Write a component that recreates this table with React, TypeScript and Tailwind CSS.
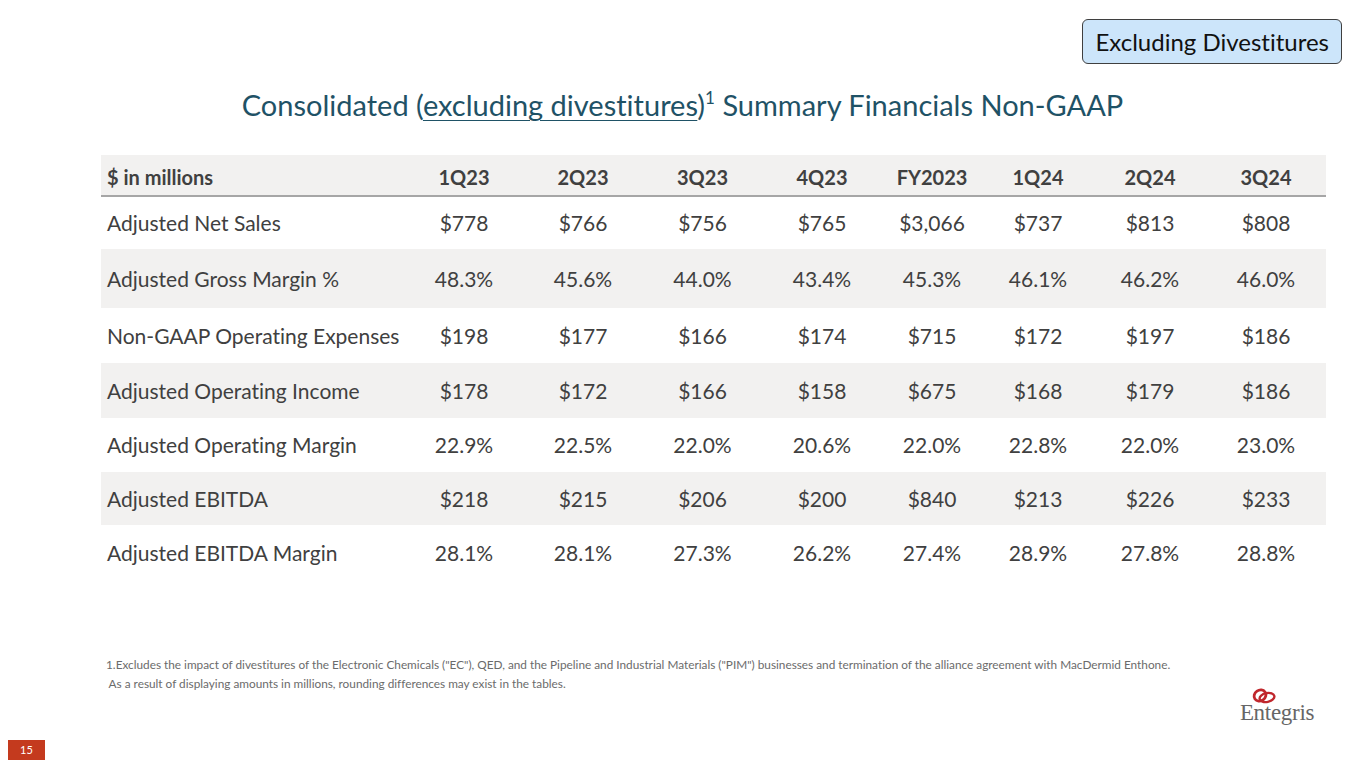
import React from "react";

const cols = ["1Q23", "2Q23", "3Q23", "4Q23", "FY2023", "1Q24", "2Q24", "3Q24"];

const rows = [
  { label: "Adjusted Net Sales", h: "h-[52px]", shade: false, values: ["$778", "$766", "$756", "$765", "$3,066", "$737", "$813", "$808"] },
  { label: "Adjusted Gross Margin %", h: "h-[59px]", shade: true, values: ["48.3%", "45.6%", "44.0%", "43.4%", "45.3%", "46.1%", "46.2%", "46.0%"] },
  { label: "Non-GAAP Operating Expenses", h: "h-[55px]", shade: false, values: ["$198", "$177", "$166", "$174", "$715", "$172", "$197", "$186"] },
  { label: "Adjusted Operating Income", h: "h-[55px]", shade: true, values: ["$178", "$172", "$166", "$158", "$675", "$168", "$179", "$186"] },
  { label: "Adjusted Operating Margin", h: "h-[54px]", shade: false, values: ["22.9%", "22.5%", "22.0%", "20.6%", "22.0%", "22.8%", "22.0%", "23.0%"] },
  { label: "Adjusted EBITDA", h: "h-[53px]", shade: true, values: ["$218", "$215", "$206", "$200", "$840", "$213", "$226", "$233"] },
  { label: "Adjusted EBITDA Margin", h: "h-[55px]", shade: false, values: ["28.1%", "28.1%", "27.3%", "26.2%", "27.4%", "28.9%", "27.8%", "28.8%"] },
];

const grid = "grid grid-cols-[304px_118px_120px_119px_120px_100px_112px_112px_120px]";

function EntegrisLogo() {
  return (
    <div className="flex flex-col w-[78px]">
      <svg width="25" height="16" viewBox="0 0 25 16" className="ml-[14px] -mb-[3px]">
        <ellipse cx="8" cy="7.5" rx="6.2" ry="5.3" fill="none" stroke="#c0272d" strokeWidth="2.8" transform="rotate(-35 8 7.5)" />
        <ellipse cx="15" cy="9.5" rx="7.5" ry="4.4" fill="none" stroke="#c0272d" strokeWidth="2.4" transform="rotate(-12 15 9.5)" />
      </svg>
      <span className="text-center font-['Liberation_Serif',serif] text-[23px] leading-[24px] text-[#666] tracking-[-0.3px]">
        Entegris
      </span>
    </div>
  );
}

export default function App() {
  return (
    <div className="relative w-[1365px] h-[768px] bg-white overflow-hidden font-['Lato',sans-serif] text-[#404040] [font-variant-ligatures:none]">
      <div className="flex justify-end pt-[19px] pr-[23px]">
        <div className="h-[45px] px-[12px] flex items-center rounded-[6px] border border-[#3f3f3f] bg-[#cce5fa] text-[24px] text-[#111]">
          Excluding Divestitures
        </div>
      </div>

      <h1 className="mt-[22px] h-[38px] text-center text-[29px] leading-[38px] text-[#1f5266]">
        Consolidated (<span className="underline underline-offset-[4px] decoration-[1px]">excluding divestitures</span>)
        <sup className="text-[17px] relative -top-[12px]">1</sup> Summary Financials Non-GAAP
      </h1>

      <div className="mt-[31px] ml-[101px] w-[1225px]">
        <div className={`${grid} h-[42px] items-end pb-[3px] bg-[#f2f1f0] border-b-[2px] border-[#a6a6a6] font-bold text-[20px]`}>
          <div className="pl-[6px]">$ in millions</div>
          {cols.map((c) => (
            <div key={c} className="text-center">{c}</div>
          ))}
        </div>
        {rows.map((r) => (
          <div key={r.label} className={`${grid} ${r.h} items-center text-[21px] ${r.shade ? "bg-[#f2f1f0]" : "bg-white"}`}>
            <div className="pl-[6px] whitespace-nowrap">{r.label}</div>
            {r.values.map((v, i) => (
              <div key={i} className="text-center">{v}</div>
            ))}
          </div>
        ))}
      </div>

      <div className="absolute left-[106px] top-[655px] text-[11.8px] leading-[19px] text-[#6b6b6b] whitespace-pre">
        <div>1.Excludes the impact of divestitures of the Electronic Chemicals ("EC"), QED, and the Pipeline and Industrial Materials ("PIM") businesses and termination of the alliance agreement with MacDermid Enthone.</div>
        <div> As a result of displaying amounts in millions, rounding differences may exist in the tables.</div>
      </div>

      <div className="absolute left-[1238px] top-[688px]">
        <EntegrisLogo />
      </div>

      <div className="absolute left-[8px] top-[740px] w-[37px] h-[20px] bg-[#c43a1e] text-white text-[11px] flex items-center justify-center">
        15
      </div>
    </div>
  );
}
